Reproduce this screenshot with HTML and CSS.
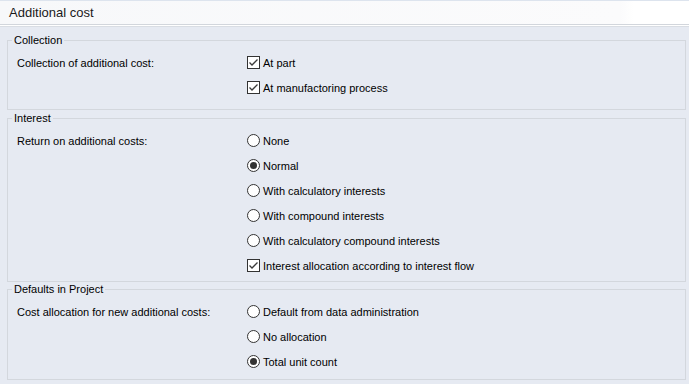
FILE: index.html
```html
<!DOCTYPE html>
<html>
<head>
<meta charset="utf-8">
<link rel="stylesheet" href="styles.css">
</head>
<body>
<div class="page">
  <div class="header"><span class="title">Additional cost</span></div>
  <div class="content">
    <fieldset class="group g1">
      <legend>Collection</legend>
      <div class="grid">
        <div class="label">Collection of additional cost:</div>
        <div class="options">
          <div class="opt"><span class="cb checked"><svg viewBox="0 0 13 13" width="13" height="13"><path d="M2.5 6.5 L5 9 L10.5 3.5" fill="none" stroke="#3a3a3a" stroke-width="1.3"/></svg></span><span>At part</span></div>
          <div class="opt"><span class="cb checked"><svg viewBox="0 0 13 13" width="13" height="13"><path d="M2.5 6.5 L5 9 L10.5 3.5" fill="none" stroke="#3a3a3a" stroke-width="1.3"/></svg></span><span>At manufactoring process</span></div>
        </div>
      </div>
    </fieldset>
    <fieldset class="group g2">
      <legend>Interest</legend>
      <div class="grid">
        <div class="label">Return on additional costs:</div>
        <div class="options">
          <div class="opt"><span class="rb"></span><span>None</span></div>
          <div class="opt"><span class="rb on"></span><span>Normal</span></div>
          <div class="opt"><span class="rb"></span><span>With calculatory interests</span></div>
          <div class="opt"><span class="rb"></span><span>With compound interests</span></div>
          <div class="opt"><span class="rb"></span><span>With calculatory compound interests</span></div>
          <div class="opt"><span class="cb checked"><svg viewBox="0 0 13 13" width="13" height="13"><path d="M2.5 6.5 L5 9 L10.5 3.5" fill="none" stroke="#3a3a3a" stroke-width="1.3"/></svg></span><span>Interest allocation according to interest flow</span></div>
        </div>
      </div>
    </fieldset>
    <fieldset class="group g3">
      <legend>Defaults in Project</legend>
      <div class="grid">
        <div class="label">Cost allocation for new additional costs:</div>
        <div class="options">
          <div class="opt"><span class="rb"></span><span>Default from data administration</span></div>
          <div class="opt"><span class="rb"></span><span>No allocation</span></div>
          <div class="opt"><span class="rb on"></span><span>Total unit count</span></div>
        </div>
      </div>
    </fieldset>
  </div>
</div>
</body>
</html>
```

FILE: styles.css
```css
html, body {
  margin: 0;
  padding: 0;
  background: #e6eaf2;
}
body {
  font-family: "Liberation Sans", Arial, sans-serif;
  font-size: 11px;
  color: #000;
  width: 689px;
  height: 384px;
  overflow: hidden;
}
.header {
  height: 23px;
  border-top: 1px solid #dde4ee;
  background: linear-gradient(to right, #f7f8fa 0%, #fbfbfc 90%, #ffffff 92%);
  border-bottom: 1px solid #d2d6dc;
  box-shadow: 0 1px 0 #ffffff, 0 2px 0 #d9dde3;
  display: flex;
  align-items: center;
  padding-left: 9px;
}
.title {
  font-size: 13px;
  color: #1a1a1a;
}
.content {
  padding: 8px 3px 0 7px;
}
.group {
  margin: 0;
  border: 1px solid #d3d7dd;
  padding: 3px 8px 9px 9px;
  min-width: 0;
}
.group legend {
  padding: 0 2px;
  margin-left: -5px;
  line-height: 14px;
  height: 14px;
}
.g2 {
  margin-top: 1px;
  padding-bottom: 3px;
}
.g3 {
  margin-top: 0;
  padding-bottom: 5px;
}
.grid {
  display: grid;
  grid-template-columns: 230px 1fr;
}
.label {
  height: 25px;
  display: flex;
  align-items: center;
}
.options {
  display: flex;
  flex-direction: column;
}
.opt {
  height: 25px;
  display: flex;
  align-items: center;
  gap: 3px;
}
.cb {
  width: 13px;
  height: 13px;
  box-sizing: border-box;
  border: 1px solid #333;
  background: #fff;
  display: flex;
  align-items: center;
  justify-content: center;
  overflow: hidden;
}
.cb svg {
  display: block;
  flex: none;
}
.rb {
  width: 13px;
  height: 13px;
  box-sizing: border-box;
  border: 1px solid #333;
  border-radius: 50%;
  background: #fff;
  display: flex;
  align-items: center;
  justify-content: center;
}
.rb.on::after {
  content: "";
  width: 7px;
  height: 7px;
  border-radius: 50%;
  background: #333;
}
```
